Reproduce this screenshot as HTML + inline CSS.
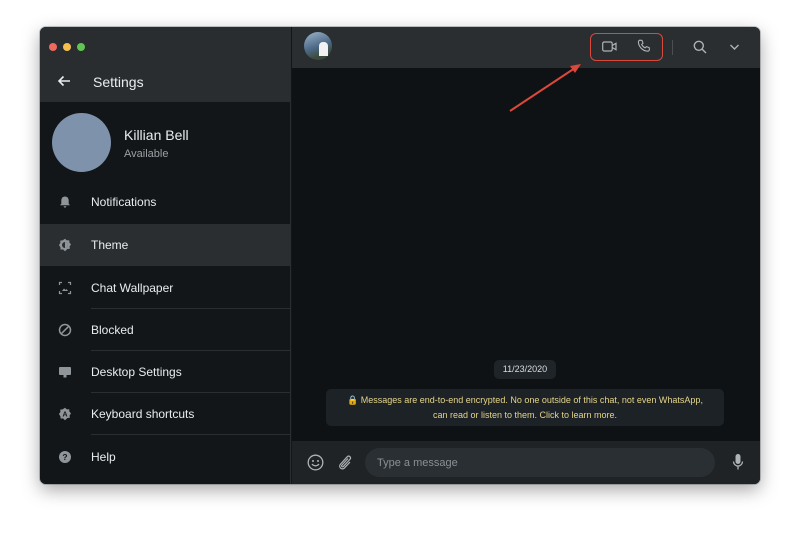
<!DOCTYPE html>
<html><head><meta charset="utf-8"><style>
*{margin:0;padding:0;box-sizing:border-box}
body{width:800px;height:536px;background:#fff;font-family:"Liberation Sans",sans-serif;position:relative;overflow:hidden}
.win{position:absolute;left:40px;top:27px;width:720px;height:457px;border-radius:6px;overflow:hidden;background:#131619;box-shadow:0 6px 18px rgba(0,0,0,.35),0 0 0 1px rgba(0,0,0,.2)}
.side{position:absolute;left:0;top:0;width:251px;height:457px;background:#131619;border-right:1px solid #2a2e31}
.shead{position:absolute;left:0;top:0;width:251px;height:75px;background:#2a2d30}
.dot{position:absolute;top:16px;width:8px;height:8px;border-radius:50%}
.shead .t{position:absolute;left:53px;top:47px;color:#e9edef;font-size:14px}
.av{position:absolute;left:12px;top:86px;width:59px;height:59px;border-radius:50%;background:#7e92ab}
.name{position:absolute;left:84px;top:100px;color:#e9edef;font-size:14px}
.avail{position:absolute;left:84px;top:121px;color:#9aa0a4;font-size:11px}
.row{position:absolute;left:0;width:251px;height:42px}
.row .l{position:absolute;left:51px;top:14px;color:#e9edef;font-size:12px}
.row .ic{position:absolute;left:18px;top:14px;width:14px;height:14px}
.row .sep{position:absolute;left:51px;right:0;bottom:0;height:1px;background:#2a2e31}
.chat{position:absolute;left:252px;top:0;width:468px;height:457px;background:#0e1215}
.chead{position:absolute;left:0;top:0;width:468px;height:41px;background:#2a2e31}
.cfoot{position:absolute;left:0;top:414px;width:468px;height:43px;background:#1f2326}
.input{position:absolute;left:73px;top:7px;width:350px;height:29px;border-radius:15px;background:#2a2f33;color:#8a9094;font-size:11px;padding:9px 0 0 12px}
.date{position:absolute;left:202px;top:333px;width:62px;height:19px;border-radius:5px;background:#1e2428;color:#d9dde0;font-size:9px;text-align:center;line-height:19px}
.enc{position:absolute;left:34px;top:362px;width:398px;height:37px;border-radius:5px;background:#1c2226;color:#e6d48a;font-size:9px;text-align:center;line-height:15px;padding-top:4px}
</style></head><body>
<div class="win">
 <div class="side">
  <div class="shead">
   <div class="dot" style="left:9px;background:#ed6a5e"></div>
   <div class="dot" style="left:23px;background:#f4bf4f"></div>
   <div class="dot" style="left:37px;background:#61c554"></div>
   <svg style="position:absolute;left:17px;top:48px" width="14" height="12" viewBox="0 0 14 12"><path d="M13 6H2M6.5 1.5L2 6l4.5 4.5" stroke="#e9edef" stroke-width="1.6" fill="none"/></svg>
   <div class="t">Settings</div>
  </div>
  <div class="av"></div>
  <div class="name">Killian Bell</div>
  <div class="avail">Available</div>
  <div class="row" style="top:154px"><svg class="ic" viewBox="0 0 14 14"><path d="M7 1.5c-2.3 0-3.7 1.8-3.7 4v3.2L2 10.3h10l-1.3-1.6V5.5c0-2.2-1.4-4-3.7-4z M5.7 11.3h2.6a1.3 1.3 0 01-2.6 0z" fill="#8f9599"/></svg><div class="l">Notifications</div></div>
  <div class="row" style="top:197px;background:#2a2e31"><svg class="ic" viewBox="0 0 14 14"><path d="M7 0.8l1.8 1.6 2.4-.2.2 2.4L13 6.4 11.6 8.4l.2 2.4-2.4.2L7 13.2 5 11.4l-2.4.2-.2-2.4L.9 7 2.4 5 2.2 2.6 4.6 2.4z" fill="#8f9599"/><circle cx="7" cy="7" r="3" fill="#2a2e31"/><path d="M7 4a3 3 0 010 6z" fill="#8f9599"/></svg><div class="l">Theme</div></div>
  <div class="row" style="top:240px"><svg class="ic" viewBox="0 0 14 14"><path d="M1.5 4V1.5H4M10 1.5h2.5V4M12.5 10v2.5H10M4 12.5H1.5V10" stroke="#8f9599" stroke-width="1.2" fill="none"/><path d="M4 10l2-2.5 1.5 1.5 1-1L10 10z" fill="#8f9599"/></svg><div class="l">Chat Wallpaper</div><div class="sep"></div></div>
  <div class="row" style="top:282px"><svg class="ic" viewBox="0 0 14 14"><circle cx="7" cy="7" r="5.5" stroke="#8f9599" stroke-width="1.5" fill="none"/><path d="M3.2 10.8L10.8 3.2" stroke="#8f9599" stroke-width="1.5"/></svg><div class="l">Blocked</div><div class="sep"></div></div>
  <div class="row" style="top:324px"><svg class="ic" viewBox="0 0 14 14"><rect x="1" y="2" width="12" height="8" rx="1" fill="#8f9599"/><rect x="5.5" y="10" width="3" height="2.5" fill="#8f9599"/></svg><div class="l">Desktop Settings</div><div class="sep"></div></div>
  <div class="row" style="top:366px"><svg class="ic" viewBox="0 0 14 14"><path d="M7 0.8l1.8 1.6 2.4-.2.2 2.4L13 6.4 11.6 8.4l.2 2.4-2.4.2L7 13.2 5 11.4l-2.4.2-.2-2.4L.9 7 2.4 5 2.2 2.6 4.6 2.4z" fill="#8f9599"/><text x="7" y="9.6" font-size="7" font-weight="bold" text-anchor="middle" fill="#131619" font-family="Liberation Sans">A</text></svg><div class="l">Keyboard shortcuts</div><div class="sep"></div></div>
  <div class="row" style="top:409px"><svg class="ic" viewBox="0 0 14 14"><circle cx="7" cy="7" r="6" fill="#8f9599"/><text x="7" y="10" font-size="8.5" font-weight="bold" text-anchor="middle" fill="#131619" font-family="Liberation Sans">?</text></svg><div class="l">Help</div></div>
 </div>
 <div class="chat">
  <div class="chead">
   <div style="position:absolute;left:12px;top:5px;width:28px;height:28px;border-radius:50%;background:linear-gradient(160deg,#9fb6cc 0%,#4d6a88 50%,#3b4a3a 80%)"><div style="position:absolute;left:15px;top:10px;width:9px;height:14px;background:#f2f2f2;border-radius:4px 4px 0 0"></div></div>
   <div style="position:absolute;left:298px;top:6px;width:73px;height:28px;border:1.5px solid #d9483b;border-radius:6px"></div>
   <svg style="position:absolute;left:310px;top:14px" width="15" height="11" viewBox="0 0 15 11"><rect x="0.7" y="1" width="9.5" height="9" rx="1.5" stroke="#aeb3b6" stroke-width="1.2" fill="none"/><path d="M10.2 4.5L14 2.3v6.4L10.2 6.5" stroke="#aeb3b6" stroke-width="1.2" fill="none"/></svg>
   <svg style="position:absolute;left:345px;top:12px" width="14" height="14" viewBox="0 0 14 14"><path d="M3 1.2l2 .2 1 2.8-1.3 1.2c.7 1.6 1.9 2.8 3.5 3.5L9.4 7.6l2.8 1 .2 2c0 .8-.8 1.6-1.8 1.6C5.8 12 1.6 7.8 1.4 3c0-1 .8-1.8 1.6-1.8z" stroke="#aeb3b6" stroke-width="1.1" fill="none"/></svg>
   <div style="position:absolute;left:380px;top:13px;width:1px;height:15px;background:#4a4f53"></div>
   <svg style="position:absolute;left:401px;top:13px" width="14" height="14" viewBox="0 0 14 14"><circle cx="5.8" cy="5.8" r="4.5" stroke="#aeb3b6" stroke-width="1.4" fill="none"/><path d="M9.2 9.2L13 13" stroke="#aeb3b6" stroke-width="1.4"/></svg>
   <svg style="position:absolute;left:437px;top:16px" width="11" height="8" viewBox="0 0 11 8"><path d="M1.5 2l4 4 4-4" stroke="#aeb3b6" stroke-width="1.4" fill="none"/></svg>
  </div>
  <svg style="position:absolute;left:210px;top:30px" width="90" height="60" viewBox="0 0 90 60"><path d="M8 54L76 9" stroke="#d9483b" stroke-width="2"/><path d="M79 7l-11 2 5 7z" fill="#d9483b"/></svg>
  <div class="date">11/23/2020</div>
  <div class="enc">🔒 Messages are end-to-end encrypted. No one outside of this chat, not even WhatsApp,<br>can read or listen to them. Click to learn more.</div>
  <div class="cfoot">
   <svg style="position:absolute;left:15px;top:13px" width="17" height="17" viewBox="0 0 17 17"><circle cx="8.5" cy="8.5" r="7.3" stroke="#aeb3b6" stroke-width="1.3" fill="none"/><circle cx="6" cy="7" r="1" fill="#aeb3b6"/><circle cx="11" cy="7" r="1" fill="#aeb3b6"/><path d="M5 10c1.8 2.4 5.2 2.4 7 0" stroke="#aeb3b6" stroke-width="1.3" fill="none"/></svg>
   <svg style="position:absolute;left:45px;top:13px" width="16" height="17" viewBox="0 0 16 17"><path d="M11 4.5L5 11c-1 1.1.3 2.5 1.4 1.4l6.5-7c1.8-1.9-.8-4.5-2.7-2.6L3.6 10c-2.7 2.9 1.2 6.7 3.9 3.9L13 8" stroke="#aeb3b6" stroke-width="1.2" fill="none"/></svg>
   <div class="input">Type a message</div>
   <svg style="position:absolute;left:440px;top:12px" width="12" height="18" viewBox="0 0 12 18"><rect x="3.5" y="1" width="5" height="10" rx="2.5" fill="#aeb3b6"/><path d="M1.5 8.5a4.5 4.5 0 009 0M6 13v3.5" stroke="#aeb3b6" stroke-width="1.3" fill="none"/></svg>
  </div>
 </div>
</div>
</body></html>
